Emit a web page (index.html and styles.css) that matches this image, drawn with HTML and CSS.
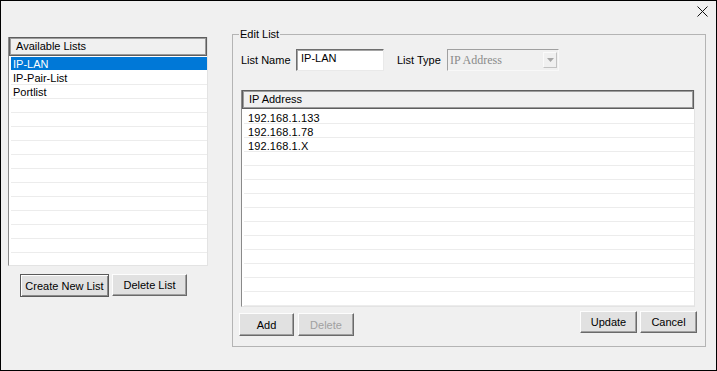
FILE: index.html
```html
<!DOCTYPE html>
<html lang="en">
<head>
  <meta charset="UTF-8">
  <title>Edit Lists</title>
  <link rel="stylesheet" href="styles.css">
</head>
<body>

  <div class="window">
    <div class="titlebar">
      <svg class="close" width="11" height="11" viewBox="0 0 11 11">
        <path d="M0.5 0.5 L10.5 10.5 M10.5 0.5 L0.5 10.5" stroke="#111" stroke-width="1" fill="none"/>
      </svg>
    </div>

    <div class="content">
      <div class="left-col">
        <div class="listview lists">
          <div class="lv-header">Available Lists</div>
          <div class="lv-row selected">IP-LAN</div>
          <div class="lv-row">IP-Pair-List</div>
          <div class="lv-row">Portlist</div>
          <div class="lv-row"></div>
          <div class="lv-row"></div>
          <div class="lv-row"></div>
          <div class="lv-row"></div>
          <div class="lv-row"></div>
          <div class="lv-row"></div>
          <div class="lv-row"></div>
          <div class="lv-row"></div>
          <div class="lv-row"></div>
          <div class="lv-row"></div>
          <div class="lv-row"></div>
          <div class="lv-row"></div>
        </div>
        <div class="left-buttons">
          <button class="btn default btn-create">Create New List</button>
          <button class="btn btn-dellist">Delete List</button>
        </div>
      </div>

      <fieldset class="group">
        <legend>Edit List</legend>

        <div class="form-row">
          <span class="field-label">List Name</span>
          <div class="textbox">IP-LAN</div>
          <span class="field-label type-label">List Type</span>
          <div class="combo">
            <span class="combo-text">IP Address</span>
            <span class="combo-btn">
              <svg width="7" height="4" viewBox="0 0 7 4"><path d="M0 0 H7 L3.5 4 Z" fill="#a6a6a6"/></svg>
            </span>
          </div>
        </div>

        <div class="listview addresses">
          <div class="lv-header">IP Address</div>
          <div class="lv-row ip">192.168.1.133</div>
          <div class="lv-row ip">192.168.1.78</div>
          <div class="lv-row ip">192.168.1.X</div>
          <div class="lv-row"></div>
          <div class="lv-row"></div>
          <div class="lv-row"></div>
          <div class="lv-row"></div>
          <div class="lv-row"></div>
          <div class="lv-row"></div>
          <div class="lv-row"></div>
          <div class="lv-row"></div>
          <div class="lv-row"></div>
          <div class="lv-row"></div>
          <div class="lv-row"></div>
        </div>

        <div class="button-row">
          <div class="btn-group left">
            <button class="btn btn-add">Add</button>
            <button class="btn btn-delete" disabled>Delete</button>
          </div>
          <div class="btn-group right">
            <button class="btn btn-update">Update</button>
            <button class="btn btn-cancel">Cancel</button>
          </div>
        </div>
      </fieldset>
    </div>
  </div>

</body>
</html>
```

FILE: styles.css
```css
body {
  margin: 0;
  font-family: "Liberation Sans", Arial, sans-serif;
  font-size: 11px;
  color: #000;
  background: #f0f0f0;
}
.window {
  width: 717px;
  height: 371px;
  box-sizing: border-box;
  border: 1px solid #000;
  background: #f0f0f0;
}
.titlebar {
  height: 26px;
  display: flex;
  justify-content: flex-end;
  padding: 5px 8px 0 0;
  box-sizing: border-box;
}
.content {
  display: flex;
  align-items: flex-start;
  padding-left: 7px;
}
.left-col {
  width: 200px;
  margin-top: 10px;
  margin-right: 24px;
}

/* list views */
.listview {
  box-sizing: border-box;
  background: #fff;
  border-left: 1px solid #8a8a8a;
  border-right: 1px solid #e3e3e3;
  border-bottom: 1px solid #e3e3e3;
  overflow: hidden;
}
.lists {
  height: 229px;
}
.addresses {
  width: 454px;
  height: 217px;
  margin: 19px 0 0 2px;
}
.lv-header {
  height: 19px;
  box-sizing: border-box;
  border: 1px solid #5e5e5e;
  box-shadow: inset 0 0 0 1px #9c9c9c;
  background: #f0f0f0;
  padding-left: 6px;
  line-height: 17px;
  margin-bottom: 1px;
}
.lv-row {
  height: 14px;
  box-sizing: border-box;
  border-bottom: 1px solid #ececec;
  margin-left: 2px;
  padding: 1px 0 0 2px;
  line-height: 12px;
  white-space: nowrap;
}
.lv-row.selected {
  background: #0078d7;
  color: #fff;
  border-bottom-color: #fff;
}
.lv-row.ip {
  padding-left: 4px;
  padding-top: 2px;
  letter-spacing: 0.1px;
}

/* buttons */
.btn {
  font-family: inherit;
  font-size: 11px;
  color: #000;
  background: #e1e1e1;
  border: 1px solid;
  border-color: #fdfdfd #6a6a6a #6a6a6a #fdfdfd;
  box-shadow: inset -1px -1px 0 #a0a0a0;
  padding: 0;
  height: 22px;
  box-sizing: border-box;
}
.btn.default {
  border: 1px solid #5a5a5a;
  box-shadow: inset 1px 1px 0 #fff, inset -1px -1px 0 #8a8a8a;
}
.btn:disabled {
  color: #a0a0a0;
}
.left-buttons {
  display: flex;
  gap: 3px;
  margin: 8px 0 0 12px;
}
.btn-create {
  width: 89px;
  height: 23px;
}
.btn-dellist {
  width: 75px;
}

/* group box */
.group {
  width: 474px;
  height: 320px;
  box-sizing: border-box;
  margin: 0;
  padding: 0 8px 0 6px;
  border: 1px solid #b4b4b4;
  min-width: 0;
}
.group legend {
  padding: 0 1px;
  line-height: 14px;
  font-size: 11px;
}
.form-row {
  display: flex;
  align-items: center;
  height: 22px;
  margin: 8px 0 0 2px;
}
.field-label {
  width: 55px;
}
.type-label {
  width: 50px;
  margin-left: 13px;
}
.textbox {
  width: 88px;
  height: 22px;
  box-sizing: border-box;
  background: #fff;
  border: 1px solid;
  border-color: #6e6e6e #e9e9e9 #e9e9e9 #6e6e6e;
  box-shadow: inset 1px 1px 0 #a5a5a5;
  padding-left: 4px;
  line-height: 17px;
}
.combo {
  width: 112px;
  height: 22px;
  box-sizing: border-box;
  display: flex;
  align-items: center;
  border: 1px solid;
  border-color: #a0a0a0 #f8f8f8 #f8f8f8 #a0a0a0;
  background: #f0f0f0;
}
.combo-text {
  flex: 1;
  font-family: "Liberation Serif", "Times New Roman", serif;
  font-size: 12px;
  color: #8a8a8a;
  padding-left: 2px;
}
.combo-btn {
  width: 14px;
  height: 16px;
  box-sizing: border-box;
  margin-right: 1px;
  border: 1px solid;
  border-color: #fafafa #c2c2c2 #c2c2c2 #fafafa;
  display: flex;
  align-items: center;
  justify-content: center;
}
.button-row {
  display: flex;
  justify-content: space-between;
  align-items: flex-start;
  margin-top: 4px;
}
.btn-group {
  display: flex;
  gap: 4px;
}
.btn-group.left {
  margin-top: 2px;
}
.btn-add {
  width: 55px;
  height: 23px;
}
.btn-delete {
  width: 56px;
  height: 23px;
}
.btn-group.right {
  gap: 3px;
}
.btn-update,
.btn-cancel {
  width: 57px;
}
```
